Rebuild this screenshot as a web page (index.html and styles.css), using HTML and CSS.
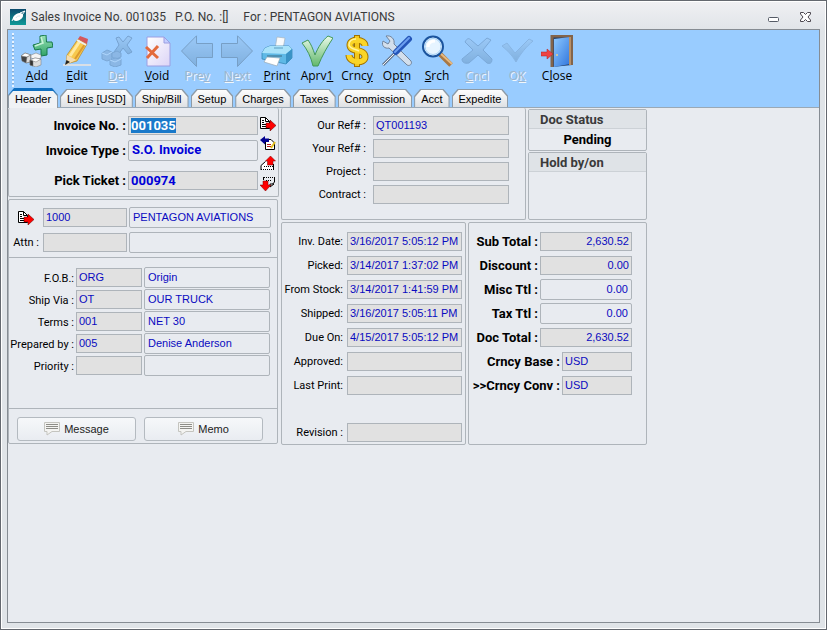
FILE: index.html
```html
<!DOCTYPE html>
<html lang="en">
<head>
  <meta charset="UTF-8">
  <meta name="viewport" content="width=device-width, initial-scale=1.0">
  <title>Sales Invoice No. 001035</title>
  <link rel="stylesheet" href="styles.css">
</head>
<body>

<!-- Shared icon shapes -->
<svg class="defs" width="0" height="0">
  <defs>
    <linearGradient id="green" x1="0" y1="0" x2="0" y2="1">
      <stop offset="0" stop-color="#9be4b8"/><stop offset="1" stop-color="#2fa266"/>
    </linearGradient>
    <linearGradient id="check" x1="0" y1="0" x2="0" y2="1">
      <stop offset="0" stop-color="#eafaea"/><stop offset="1" stop-color="#62b86c"/>
    </linearGradient>
    <linearGradient id="dim" x1="0" y1="0" x2="0" y2="1">
      <stop offset="0" stop-color="#9cc8f4"/><stop offset="1" stop-color="#76a5d2"/>
    </linearGradient>
    <linearGradient id="door" x1="0" y1="0" x2="1" y2="1">
      <stop offset="0" stop-color="#8cc8ff"/><stop offset="1" stop-color="#2f74dc"/>
    </linearGradient>
    <linearGradient id="page" x1="0" y1="0" x2="1" y2="1">
      <stop offset="0" stop-color="#ffffff"/><stop offset="1" stop-color="#dcd4f6"/>
    </linearGradient>
    <linearGradient id="logo" x1="0" y1="0" x2="0" y2="1">
      <stop offset="0" stop-color="#0c4a6c"/><stop offset="1" stop-color="#0e9a98"/>
    </linearGradient>
    <symbol id="doc-right" viewBox="0 0 16 15">
      <path d="M.5 1.500H5.500L9.500 5.500V12.500H.5Z" fill="#fff" stroke="#000"/>
      <path d="M5.500 1.500V5.500H9.500M2 4.500H4M2 6.500H4M2 8.500H6M2 10.500H6" fill="none" stroke="#000"/>
      <path d="M6 7H10V4L16 9.500L10 15V12H6Z" fill="#f00" stroke="#500" stroke-width=".5"/>
    </symbol>
    <symbol id="note" viewBox="0 0 16 14">
      <path d="M.5.5H15.500V9.500H8L3 13V9.500H.5Z" fill="#f4f4f2" stroke="#c4c4bf"/>
      <path d="M2 2.500H14M2 4.500H14M2 6.500H14" stroke="#8d8d88"/>
    </symbol>
  </defs>
</svg>

<div class="window">
  <header class="titlebar">
    <svg class="logo" width="16" height="16" viewBox="0 0 16 16">
      <rect width="16" height="16" fill="url(#logo)"/>
      <ellipse cx="8" cy="8" rx="5.500" ry="3.500" transform="rotate(-28 8 8)" fill="#fff"/>
      <path d="M2 12L4 8M10 4L15 2L12 6" stroke="#fff" fill="none"/>
      <path d="M6 9C7 7 8 7 10 7" stroke="#cfe8ee" fill="none"/>
    </svg>
    <h1>Sales Invoice No. 001035 &nbsp; P.O. No. :[] &nbsp; &nbsp; For : PENTAGON AVIATIONS</h1>
    <button class="win-btn" aria-label="Minimize">
      <svg width="12" height="12" viewBox="0 0 12 12"><rect x=".5" y="6.500" width="10" height="4" rx="1" fill="#fff" stroke="#555b66"/></svg>
    </button>
    <button class="win-btn" aria-label="Close window">
      <svg width="12" height="12" viewBox="0 0 12 12"><path d="M.5 1.500H3.500L5.500 3.500L7.500 1.500H10.500V3L8 6L10.500 9V10.500H7.500L5.500 8.500L3.500 10.500H.5V9L3 6L.5 3Z" fill="#fff" stroke="#4d4850"/></svg>
    </button>
  </header>

  <div class="frame">
    <div class="toolbar">
      <span class="grip"></span>
      <button class="tool">
        <svg viewBox="0 0 32 32">
          <path d="M19 1L25 0L25.500 7L31 7L32 12L26 13L26 20L20 21L20 14L14 15L12 10L19 8Z" fill="url(#green)" stroke="#17784a"/>
          <path d="M20 2L22 8L14 11" fill="none" stroke="#c8f2d8" stroke-width="1.500"/>
          <g stroke="#777" stroke-width=".5"><path d="M0 21L4 18L10 20L9 27L5 28L1 26Z" fill="#444"/><path d="M0 21L4 18L10 20L6 22Z" fill="#fff"/><path d="M6 22L10 20L9 27L5 28Z" fill="#ddd"/><path d="M10 20L15 18L20 20L20 23L15 25L10 23Z" fill="#f4f4f4"/><path d="M9 25L14 23L20 24L20 30L15 32L9 30Z" fill="#ddd"/><path d="M9 25L14 23L20 24L15 27Z" fill="#fff"/><path d="M9 25L12 26V31L9 30Z" fill="#333"/></g>
        </svg>
        <span><u>A</u>dd</span>
      </button>
      <button class="tool">
        <svg viewBox="0 0 32 32">
          <path d="M2 30H30" stroke="#d9dfe6" stroke-width="2"/>
          <path d="M6 20L17 4L26 9L16 26L5 29Z" fill="#f7c94e" stroke="#b98522" stroke-width=".7"/>
          <path d="M9 21L19 6" stroke="#ffeaa0" stroke-width="3"/><path d="M14 24L24 9" stroke="#dc9a2e" stroke-width="2"/>
          <path d="M17 4L19 1L27 4L26 9Z" fill="#d4575c"/><path d="M16 5L25 10" stroke="#eee" stroke-width="2"/>
          <path d="M6 20L15 25L5 30Z" fill="#f4dcb2"/><path d="M5.500 25L9 27L4 30Z" fill="#222"/>
        </svg>
        <span><u>E</u>dit</span>
      </button>
      <button class="tool" disabled>
        <svg viewBox="0 0 32 32">
          <path d="M15 3L18 2L22 7L27 1L31 3L26 10L31 17L27 19L22 13L17 20L13 17L18 10Z" fill="url(#dim)" stroke="#6790bc"/>
          <g fill="#86afdb" stroke="#6d97c3"><path d="M1 18L6 15L11 17V24L6 26L1 24Z"/><path d="M11 18L16 16L20 18V22L15 24L11 22Z"/><path d="M9 25L14 23L20 24V30L14 32L9 30Z"/></g>
          <path d="M1 18L6 20L11 17M9 25L14 27L20 24" fill="none" stroke="#b8dafb"/>
        </svg>
        <span><u>D</u>el</span>
      </button>
      <button class="tool">
        <svg viewBox="0 0 32 32">
          <path d="M6 2H23L29 8V31H6Z" fill="url(#page)" stroke="#9a9ee2"/>
          <path d="M23 2V8H29Z" fill="#c5ceff" stroke="#9a9ee2"/>
          <path d="M5 12L17 23M17 11L6 23" stroke="#e36a3c" stroke-width="3"/>
        </svg>
        <span><u>V</u>oid</span>
      </button>
      <button class="tool" disabled>
        <svg viewBox="0 0 32 32"><path d="M.5 16L15.500 .8V8.500H31.500V22.500H15.500V31.500Z" fill="url(#dim)" stroke="#6a8cae"/></svg>
        <span>Pre<u>v</u></span>
      </button>
      <button class="tool" disabled>
        <svg viewBox="0 0 32 32"><path d="M31.500 16L16.500 .8V8.500H.5V22.500H16.500V31.500Z" fill="url(#dim)" stroke="#6a8cae"/></svg>
        <span><u>N</u>ext</span>
      </button>
      <button class="tool">
        <svg viewBox="0 0 32 32">
          <path d="M16 2L24 3L22 14H14Z" fill="#f8fafc" stroke="#a7b4bf" stroke-width=".7"/>
          <path d="M4 13L9 11H28L31 14V23L25 29L1 24V18Z" fill="#5fb9e6" stroke="#2e7fae" stroke-width=".7"/>
          <path d="M4 13L9 11H28L31 14L25 19L1 18Z" fill="#a9e2fa"/>
          <path d="M13 13H22" stroke="#5a9dc0"/>
          <path d="M6 21H21" stroke="#3c6a84"/>
          <path d="M6 22L19 23L16 31L3 27Z" fill="#fff" stroke="#97a9b5" stroke-width=".7"/>
          <path d="M25 19V29L31 23V14Z" fill="#3a93c6"/>
        </svg>
        <span><u>P</u>rint</span>
      </button>
      <button class="tool">
        <svg viewBox="0 0 32 32"><path d="M1 8L7 5C10 9 12 14 14 20C17 12 22 5 27 1L32 3C26 12 21 21 17 31H12C10 22 6 14 1 8Z" fill="url(#check)" stroke="#43985a"/></svg>
        <span>Aprv<u>1</u></span>
      </button>
      <button class="tool">
        <svg viewBox="0 0 32 32">
          <path d="M16 0V32" stroke="#a17300" stroke-width="6"/>
          <path d="M24 11C24 4 9 3 9 10C9 18 24 13 24 22C24 29 8 28 8 20" fill="none" stroke="#a17300" stroke-width="7"/>
          <path d="M16 1V31" stroke="#f4c81c" stroke-width="4"/>
          <path d="M24 11C24 4 9 3 9 10C9 18 24 13 24 22C24 29 8 28 8 20" fill="none" stroke="#fad528" stroke-width="5"/>
          <path d="M15 4C10 4 8 7 8 10C9 14 14 14 18 16" fill="none" stroke="#fff3a0" stroke-width="1.500"/>
        </svg>
        <span>Crnc<u>y</u></span>
      </button>
      <button class="tool">
        <svg viewBox="0 0 32 32">
          <path d="M5 1L9 6L7 9L2 6C0 11 4 14 8 13L25 29C28 33 33 28 29 25L13 9C14 4 10 0 5 1Z" fill="#d3dfec" stroke="#71839b"/>
          <path d="M2 30L14 18" stroke="#67788f" stroke-width="3"/><path d="M2 30L14 18" stroke="#eef3f8"/>
          <path d="M15 17L28 4" stroke="#2455b8" stroke-width="6" stroke-linecap="round"/>
          <path d="M14 17L28 3" stroke="#6c9ff0" stroke-width="2" stroke-linecap="round"/>
        </svg>
        <span>Op<u>t</u>n</span>
      </button>
      <button class="tool">
        <svg viewBox="0 0 32 32">
          <path d="M18 18L30 30" stroke="#a87743" stroke-width="5"/><path d="M19 18L31 29" stroke="#e6b980" stroke-width="2"/>
          <circle cx="12" cy="11.500" r="10" fill="#e6f4ff" stroke="#1b549e" stroke-width="2"/>
          <circle cx="12" cy="11.500" r="8" fill="none" stroke="#a4d0f6"/><path d="M7 12C7 8 10 6 14 6" stroke="#fff" stroke-width="3" fill="none"/>
        </svg>
        <span><u>S</u>rch</span>
      </button>
      <button class="tool" disabled>
        <svg viewBox="0 0 32 32"><path d="M4 7C6 3 8 3 10 5L17 11L26 3L30 5L22 15L31 24C31 29 28 29 26 28L17 20L8 28C3 29 1 27 1 24L12 15Z" fill="url(#dim)" stroke="#6f9ac8"/></svg>
        <span><u>C</u>ncl</span>
      </button>
      <button class="tool" disabled>
        <svg viewBox="0 0 32 32"><path d="M1 11L6 8L14 18L28 4L32 6C25 12 20 18 15 27C11 20 6 15 1 11Z" fill="url(#dim)" stroke="#80abd8"/></svg>
        <span>O<u>K</u></span>
      </button>
      <button class="tool">
        <svg viewBox="0 0 32 32">
          <path d="M11 32V1H31V30" fill="#223f68" stroke="#83644a" stroke-width="3"/>
          <path d="M13 4L29 2V29L13 32Z" fill="url(#door)"/><path d="M29 2V30" stroke="#b89068" stroke-width="2"/>
          <path d="M0 17H6V14L12 19L6 24V21H0Z" fill="#ee4444" stroke="#b02020" stroke-width=".5"/><circle cx="16" cy="20" r="1" fill="#e9d08e"/>
        </svg>
        <span>C<u>l</u>ose</span>
      </button>
    </div>

    <nav class="tabs">
      <button class="tab active">Header</button>
      <button class="tab">Lines [USD]</button>
      <button class="tab">Ship/Bill</button>
      <button class="tab">Setup</button>
      <button class="tab">Charges</button>
      <button class="tab">Taxes</button>
      <button class="tab">Commission</button>
      <button class="tab">Acct</button>
      <button class="tab">Expedite</button>
    </nav>

    <main class="content">
      <div class="col-left">
        <section class="panel invoice">
          <div class="invoice-fields">
            <div class="row">
              <label for="invoiceNo">Invoice No. :</label>
              <input type="text" id="invoiceNo" value="001035">
            </div>
            <div class="row">
              <label for="invoiceType">Invoice Type :</label>
              <input type="text" id="invoiceType" class="desc" value="S.O. Invoice" readonly>
            </div>
            <div class="row spaced">
              <label for="pickTicket">Pick Ticket :</label>
              <input type="text" id="pickTicket" value="000974">
            </div>
          </div>
          <div class="side-icons">
            <button class="icon-btn" aria-label="Open invoice"><svg width="16" height="15"><use href="#doc-right"/></svg></button>
            <button class="icon-btn" aria-label="Previous document">
              <svg width="16" height="15" viewBox="0 0 16 15">
                <path d="M5.500 3.500H11L14.500 7V13.500H5.500Z" fill="#fff" stroke="#000"/>
                <path d="M7 8.500H11M7 10.500H11" stroke="#b01818"/>
                <path d="M0 4L5 0V2.500H9V6H5V8.500Z" fill="#000090"/>
                <path d="M11 12L15 6" stroke="#e4c020" stroke-width="2"/>
              </svg>
            </button>
            <button class="icon-btn" aria-label="Send up">
              <svg width="16" height="15" viewBox="0 0 16 15">
                <path d="M1.500 13.500V9.500L5.500 5.500H7V10.500H13.500V13.500Z" fill="#fff"/>
                <path d="M1 14V9.500L5.500 5.500M13.500 8V14" fill="none" stroke="#000"/>
                <path d="M1 13.500H14M4 10.500H13" stroke="#000" stroke-dasharray="1 1"/>
                <path d="M7.500 9V5H5.500L10.500 0L15.500 5H13V9Z" fill="#f00" stroke="#700" stroke-width=".5"/>
              </svg>
            </button>
            <button class="icon-btn" aria-label="Send down">
              <svg width="16" height="15" viewBox="0 0 16 15">
                <path d="M3.500 1V4M14.500 1V6L10 11" fill="none" stroke="#000"/>
                <path d="M4 1.500H14M6 4.500H12" stroke="#000" stroke-dasharray="1 1"/>
                <path d="M10 8H14L10 11Z" fill="#fff" stroke="#000"/>
                <path d="M3 5H8V9H11L5.500 15L0 9H3Z" fill="#f00" stroke="#700" stroke-width=".5"/>
              </svg>
            </button>
          </div>
        </section>

        <section class="panel customer">
          <div class="party">
            <div class="row">
              <button class="icon-btn" aria-label="Open customer"><svg width="16" height="15"><use href="#doc-right"/></svg></button>
              <input type="text" aria-label="Customer code" value="1000">
              <input type="text" class="desc" aria-label="Customer name" value="PENTAGON AVIATIONS" readonly>
            </div>
            <div class="row">
              <label for="attn">Attn :</label>
              <input type="text" id="attn">
              <input type="text" class="desc" aria-label="Attention name" readonly>
            </div>
          </div>
          <div class="terms">
            <div class="row">
              <label for="fob">F.O.B.:</label>
              <input type="text" id="fob" value="ORG">
              <input type="text" class="desc" aria-label="F.O.B. description" value="Origin" readonly>
            </div>
            <div class="row">
              <label for="shipVia">Ship Via :</label>
              <input type="text" id="shipVia" value="OT">
              <input type="text" class="desc" aria-label="Ship via description" value="OUR TRUCK" readonly>
            </div>
            <div class="row">
              <label for="terms">Terms :</label>
              <input type="text" id="terms" value="001">
              <input type="text" class="desc" aria-label="Terms description" value="NET 30" readonly>
            </div>
            <div class="row">
              <label for="preparedBy">Prepared by :</label>
              <input type="text" id="preparedBy" value="005">
              <input type="text" class="desc" aria-label="Prepared by name" value="Denise Anderson" readonly>
            </div>
            <div class="row">
              <label for="priority">Priority :</label>
              <input type="text" id="priority">
              <input type="text" class="desc" aria-label="Priority description" readonly>
            </div>
          </div>
          <div class="actions">
            <button class="push"><svg width="16" height="14"><use href="#note"/></svg>Message</button>
            <button class="push"><svg width="16" height="14"><use href="#note"/></svg>Memo</button>
          </div>
        </section>
      </div>

      <div class="col-right">
        <div class="upper">
          <section class="panel refs">
            <div class="row"><label for="ourRef">Our Ref# :</label><input type="text" id="ourRef" value="QT001193"></div>
            <div class="row"><label for="yourRef">Your Ref# :</label><input type="text" id="yourRef"></div>
            <div class="row"><label for="project">Project :</label><input type="text" id="project"></div>
            <div class="row"><label for="contract">Contract :</label><input type="text" id="contract"></div>
          </section>
          <div class="status-col">
            <section class="panel status">
              <h2>Doc Status</h2>
              <p>Pending</p>
            </section>
            <section class="panel status hold">
              <h2>Hold by/on</h2>
            </section>
          </div>
        </div>

        <div class="lower">
          <section class="panel dates">
            <div class="row"><label for="invDate">Inv. Date:</label><input type="text" id="invDate" value="3/16/2017 5:05:12 PM"></div>
            <div class="row"><label for="picked">Picked:</label><input type="text" id="picked" value="3/14/2017 1:37:02 PM"></div>
            <div class="row"><label for="fromStock">From Stock:</label><input type="text" id="fromStock" value="3/14/2017 1:41:59 PM"></div>
            <div class="row"><label for="shipped">Shipped:</label><input type="text" id="shipped" value="3/16/2017 5:05:11 PM"></div>
            <div class="row"><label for="dueOn">Due On:</label><input type="text" id="dueOn" value="4/15/2017 5:05:12 PM"></div>
            <div class="row"><label for="approved">Approved:</label><input type="text" id="approved"></div>
            <div class="row"><label for="lastPrint">Last Print:</label><input type="text" id="lastPrint"></div>
            <div class="row revision"><label for="revision">Revision :</label><input type="text" id="revision"></div>
          </section>
          <section class="panel totals">
            <div class="row"><label for="subTotal">Sub Total :</label><input type="text" id="subTotal" value="2,630.52"></div>
            <div class="row"><label for="discount">Discount :</label><input type="text" id="discount" value="0.00"></div>
            <div class="row"><label for="miscTtl">Misc Ttl :</label><input type="text" id="miscTtl" class="desc" value="0.00" readonly></div>
            <div class="row"><label for="taxTtl">Tax Ttl :</label><input type="text" id="taxTtl" class="desc" value="0.00" readonly></div>
            <div class="row"><label for="docTotal">Doc Total :</label><input type="text" id="docTotal" value="2,630.52"></div>
            <div class="row currency"><label for="crncyBase">Crncy Base :</label><input type="text" id="crncyBase" value="USD"></div>
            <div class="row currency"><label for="crncyConv">&gt;&gt;Crncy Conv :</label><input type="text" id="crncyConv" value="USD"></div>
          </section>
        </div>
      </div>
    </main>
  </div>
</div>

<script>
  const invoiceNo = document.getElementById("invoiceNo");
  invoiceNo.focus();
  invoiceNo.select();
</script>

</body>
</html>
```

FILE: styles.css
```css
* {
  box-sizing: border-box;
}

body {
  margin: 0;
  font-family: "Liberation Sans", Arial, sans-serif;
  font-size: 11px;
  line-height: 14px;
  color: #000;
}

button, input {
  font: inherit;
  color: inherit;
  margin: 0;
  padding: 0;
}

button {
  border: none;
  background: none;
}

.defs {
  position: absolute;
}

.window {
  min-height: 100vh;
  display: flex;
  flex-direction: column;
  padding: 0 6px 6px;
  border: 1px solid #64686f;
  box-shadow: inset 0 0 0 1px #fff;
  background: linear-gradient(#f0f0f3, #e0e4e8 30px);
}

/* Title bar */
.titlebar {
  display: flex;
  align-items: center;
  height: 28px;
  padding: 4px 8px 0 3px;
}

.titlebar h1 {
  flex: 1;
  margin: 0 0 0 5px;
  font-family: Roboto, sans-serif;
  font-size: 12px;
  font-weight: normal;
  color: #3a3a3a;
}

.win-btn {
  margin-left: 20px;
  height: 12px;
}

.win-btn svg, .tool svg, .icon-btn svg, .push svg {
  display: block;
}

.frame {
  flex: 1;
  border: 1px solid #868c93;
  background: #e8ebf0;
}

/* Toolbar */
.toolbar {
  display: flex;
  height: 59px;
  padding: 5px 4px 0;
  background: #99ccff;
}

.grip {
  width: 2px;
  height: 54px;
  margin: -2px 3px 0 0;
  background: repeating-linear-gradient(#e8f3ff 0 2px, #8aaed2 2px 3px, #99ccff 3px 4px);
}

.tool {
  width: 40px;
  display: flex;
  flex-direction: column;
  align-items: center;
  gap: 1px;
  font-family: "Open Sans", sans-serif;
  font-size: 12px;
  line-height: 16px;
}

.tool svg {
  width: 32px;
  height: 32px;
}

.tool:disabled {
  color: #9db4cc;
  text-shadow: 1px 1px 0 #f2f7fc;
}

.tool:disabled svg {
  opacity: 0.7;
}

/* Tabs */
.tabs {
  display: flex;
  align-items: flex-end;
  gap: 2px;
  height: 19px;
  background: #99ccff;
  border-bottom: 1px solid #9aa8b5;
}

.tab {
  position: relative;
  z-index: 0;
  height: 18px;
  padding: 3px 7px 0;
  line-height: 15px;
  background: #8e9aa5;
  clip-path: polygon(0 7px, 6px 0, calc(100% - 6px) 0, 100% 7px, 100% 100%, 0 100%);
}

.tab::before {
  content: "";
  position: absolute;
  z-index: -1;
  inset: 1px 1px 0;
  background: linear-gradient(#fdfdfd, #dfe1e4);
  clip-path: polygon(0 7px, 6px 0, calc(100% - 6px) 0, 100% 7px, 100% 100%, 0 100%);
}

.tab.active {
  height: 20px;
  margin-bottom: -1px;
  background: linear-gradient(#0f6fc0 3px, #8e9aa5 8px);
}

.tab.active::before {
  inset: 3px 1px 0;
  background: #f0f2f5;
  clip-path: polygon(0 5px, 4px 0, calc(100% - 4px) 0, 100% 5px, 100% 100%, 0 100%);
}

/* Form panels */
.content {
  display: flex;
  gap: 2px;
}

.col-left {
  flex: 0 0 271px;
  min-width: 0;
}

.col-right {
  flex: 0 0 366px;
}

.panel {
  border: 1px solid #aeb4ba;
  border-radius: 2px;
}

.row {
  display: flex;
  align-items: center;
  justify-content: flex-end;
}

.row label {
  flex: 1;
  font-family: Roboto, sans-serif;
  text-align: right;
  white-space: nowrap;
}

input {
  width: 84px;
  height: 19px;
  padding: 0 2px 1px;
  border: 1px solid #aeb4ba;
  background: #e1e1e1;
  color: #0a0ac0;
  outline: none;
}

input.desc {
  height: 21px;
  padding: 0 3px 2px;
  border-radius: 2px;
  background: #e8ebf0;
}

input::selection {
  background: #1979ca;
  color: #fff;
}

/* Invoice panel */
.invoice {
  display: flex;
  gap: 2px;
  padding: 8px 2px 5px 0;
  border-top: none;
}

.invoice-fields {
  flex: 1;
  min-width: 0;
  font-family: Roboto, sans-serif;
  font-size: 13px;
  font-weight: bold;
}

.invoice .row {
  gap: 2px;
  margin-bottom: 5px;
}

.invoice .spaced {
  margin: 10px 0 0;
}

.invoice input {
  width: 130px;
  color: #0000d8;
}

.side-icons {
  display: flex;
  flex-direction: column;
  gap: 5px;
}

.icon-btn {
  width: 16px;
  height: 15px;
}

/* Customer panel */
.customer {
  margin: 2px 1px 0 0;
}

.party {
  display: flex;
  flex-direction: column;
  gap: 4px;
  padding: 7px 6px 4px;
}

.party .row, .terms .row {
  gap: 2px;
}

.party label {
  padding-right: 2px;
}

.party .icon-btn {
  margin-right: 7px;
}

.party .desc {
  width: 142px;
}

.terms {
  display: flex;
  flex-direction: column;
  gap: 1px;
  padding: 9px 7px 32px 0;
  border-top: 1px solid #aeb4ba;
}

.terms label {
  padding-top: 2px;
}

.terms input {
  width: 66px;
}

.terms .desc {
  width: 126px;
}

.actions {
  display: flex;
  gap: 8px;
  padding: 8px 14px 2px 8px;
  border-top: 1px solid #aeb4ba;
}

.push {
  flex: 1;
  display: flex;
  align-items: center;
  justify-content: center;
  gap: 4px;
  height: 24px;
  color: #222;
  border: 1px solid #b4bac0;
  border-radius: 3px;
  background: linear-gradient(#f6f8fa, #e9ecf1);
}

/* Reference and status panels */
.upper, .lower {
  display: flex;
  gap: 2px;
}

.refs {
  flex: 1;
  display: flex;
  flex-direction: column;
  gap: 4px;
  padding: 8px 16px 15px;
  border-top: none;
}

.refs .row {
  gap: 7px;
}

.refs input {
  width: 136px;
}

.status-col {
  width: 119px;
  display: flex;
  flex-direction: column;
  gap: 1px;
  padding: 1px 0 0;
}

.status {
  font-family: Roboto, sans-serif;
  font-size: 13px;
  font-weight: bold;
}

.status h2 {
  margin: 0;
  padding: 3px 11px 1px;
  font-size: 13px;
  line-height: 14px;
  color: #3a3a3a;
  background: #dfe3e7;
  border-bottom: 1px solid #ccd1d6;
}

.status p {
  margin: 0;
  padding: 4px 0 3px;
  text-align: center;
}

.hold {
  flex: 1;
}

/* Dates and totals */
.lower {
  margin-top: 2px;
}

.dates, .totals {
  padding: 8px 3px 1px;
}

.lower .row {
  height: 21px;
  gap: 4px;
  margin-bottom: 3px;
}

.dates {
  width: 185px;
}

.dates input {
  width: 115px;
}

.dates .revision {
  margin: 26px 0 0;
}

.totals {
  flex: 1;
  padding-right: 14px;
}

.totals .row {
  gap: 2px;
}

.totals label {
  font-size: 13px;
  font-weight: bold;
}

.totals input {
  width: 92px;
  text-align: right;
}

.totals .currency input {
  width: 70px;
  text-align: left;
}
```
